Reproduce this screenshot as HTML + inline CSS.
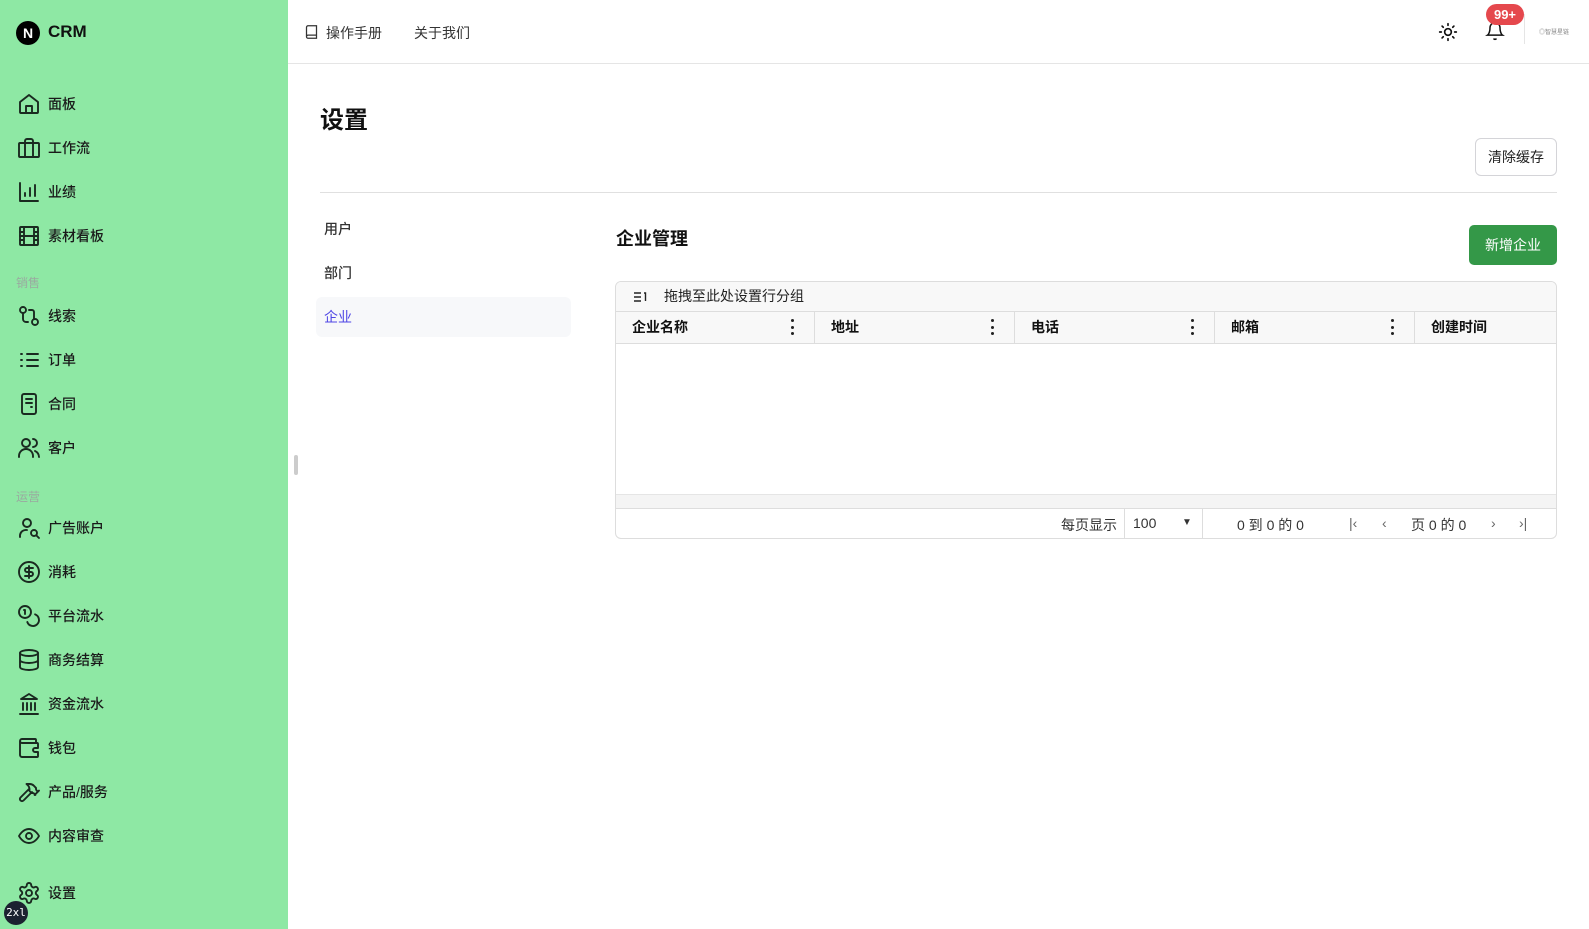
<!DOCTYPE html>
<html><head><meta charset="utf-8"><style>
*{box-sizing:border-box;margin:0;padding:0}
body{width:1589px;height:929px;overflow:hidden;font-family:"Liberation Sans","Noto Sans CJK SC",sans-serif;color:#111;background:#fff;position:relative}
.sb{position:absolute;left:0;top:0;width:288px;height:929px;background:#8ee8a4}
.abs{position:absolute}
.it{position:absolute;left:17px;display:flex;align-items:center;font-size:14px;color:#1a1a1a;font-weight:500;height:24px}
.it svg{width:24px;height:24px;margin-right:7px;fill:none;stroke:#1a2a20;stroke-width:1.9;stroke-linecap:round;stroke-linejoin:round}
.sec{position:absolute;left:16px;font-size:12px;color:#9aaaa0}
.th{position:absolute;top:311px;height:32px;border-right:1px solid #ddd;font-size:14px;font-weight:600;display:flex;align-items:center;padding-left:16px}
.dots{position:absolute;right:20px;top:8px;width:3px;height:16px;display:flex;flex-direction:column;justify-content:space-between}
.dots i{display:block;width:3px;height:3px;border-radius:50%;background:#222}
</style></head><body>
<div class="sb">
 <div class="abs" style="left:16px;top:21px;width:24px;height:24px;border-radius:50%;background:#000;color:#fff;font-size:14px;text-align:center;line-height:24px;font-weight:600">N</div>
 <div class="abs" style="left:48px;top:22px;font-size:17px;font-weight:700">CRM</div>
 <div class="it" style="top:92px"><svg viewBox="0 0 24 24"><path d="M3 10l9-7 9 7v10a1 1 0 0 1-1 1H4a1 1 0 0 1-1-1z"/><path d="M9 21v-7h6v7"/></svg>面板</div>
 <div class="it" style="top:136px"><svg viewBox="0 0 24 24"><rect x="2" y="7" width="20" height="14" rx="1"/><path d="M16 21V5a2 2 0 0 0-2-2h-4a2 2 0 0 0-2 2v16"/></svg>工作流</div>
 <div class="it" style="top:180px"><svg viewBox="0 0 24 24"><path d="M3 3v18h18M8 16v-3M13 16V8M18 16V5"/></svg>业绩</div>
 <div class="it" style="top:224px"><svg viewBox="0 0 24 24"><rect x="3" y="3" width="18" height="18" rx="1"/><path d="M7 3v18M17 3v18M3 8h4M3 12h18M3 16h4M17 8h4M17 16h4"/></svg>素材看板</div>
 <div class="sec" style="top:274px">销售</div>
 <div class="it" style="top:304px"><svg viewBox="0 0 24 24"><circle cx="6" cy="6" r="3"/><circle cx="18" cy="18" r="3"/><path d="M6 9v6a3 3 0 0 0 3 3h2M12 6h3a2 2 0 0 1 2 2v7"/></svg>线索</div>
 <div class="it" style="top:348px"><svg viewBox="0 0 24 24"><path d="M10 6h11M10 12h11M10 18h11M4 6h1M4 12h1M4 18h1"/></svg>订单</div>
 <div class="it" style="top:392px"><svg viewBox="0 0 24 24"><rect x="5" y="2" width="14" height="20" rx="2"/><path d="M9 7h6M9 11h6M14 15h1"/></svg>合同</div>
 <div class="it" style="top:436px"><svg viewBox="0 0 24 24"><circle cx="9" cy="7" r="4"/><path d="M2 21v-1a7 7 0 0 1 14 0v1M16 3a4 4 0 0 1 0 8M22 21a7 7 0 0 0-4-6"/></svg>客户</div>
 <div class="sec" style="top:488px">运营</div>
 <div class="it" style="top:516px"><svg viewBox="0 0 24 24"><circle cx="10" cy="7" r="4"/><path d="M3 21v-2a6 6 0 0 1 7-5"/><circle cx="17" cy="17" r="3"/><path d="M19.5 19.5L22 22"/></svg>广告账户</div>
 <div class="it" style="top:560px"><svg viewBox="0 0 24 24"><circle cx="12" cy="12" r="10"/><path d="M16 8h-6a2 2 0 1 0 0 4h4a2 2 0 1 1 0 4H8M12 18V6"/></svg>消耗</div>
 <div class="it" style="top:604px"><svg viewBox="0 0 24 24"><circle cx="8" cy="8" r="6"/><path d="M18.1 10.4A6 6 0 1 1 10.3 18M7 6h1v4"/></svg>平台流水</div>
 <div class="it" style="top:648px"><svg viewBox="0 0 24 24"><ellipse cx="12" cy="5" rx="9" ry="3"/><path d="M3 5v14c0 1.7 4 3 9 3s9-1.3 9-3V5M3 12c0 1.7 4 3 9 3s9-1.3 9-3"/></svg>商务结算</div>
 <div class="it" style="top:692px"><svg viewBox="0 0 24 24"><path d="M3 22h18M6 18v-7M10 18v-7M14 18v-7M18 18v-7M12 2l8 5H4z"/></svg>资金流水</div>
 <div class="it" style="top:736px"><svg viewBox="0 0 24 24"><path d="M19 7V4a1 1 0 0 0-1-1H5a2 2 0 0 0 0 4h15a1 1 0 0 1 1 1v4h-3a2 2 0 0 0 0 4h3v4a1 1 0 0 1-1 1H5a2 2 0 0 1-2-2V5"/></svg>钱包</div>
 <div class="it" style="top:780px"><svg viewBox="0 0 24 24"><path d="M15 12l-8.5 8.5a2.1 2.1 0 0 1-3-3L12 9M17.6 15L22 10.6M20.9 11.7l-1.3-1.3a2 2 0 0 1-.6-1.4V7.9L16.7 5.6A5.6 5.6 0 0 0 12.8 4H9.5l1 .9a6 6 0 0 1 2 4.5V11l2 2h1.2a2 2 0 0 1 1.4.6l1.3 1.3"/></svg>产品/服务</div>
 <div class="it" style="top:824px"><svg viewBox="0 0 24 24"><path d="M2 12s3.5-7 10-7 10 7 10 7-3.5 7-10 7S2 12 2 12z"/><circle cx="12" cy="12" r="3"/></svg>内容审查</div>
 <div class="it" style="top:881px"><svg viewBox="0 0 24 24"><circle cx="12" cy="12" r="3"/><path d="M12.2 2h-.4a2 2 0 0 0-2 2v.2a2 2 0 0 1-1 1.7l-.4.3a2 2 0 0 1-2 0l-.2-.1a2 2 0 0 0-2.7.7l-.2.4a2 2 0 0 0 .7 2.7l.2.1a2 2 0 0 1 1 1.7v.5a2 2 0 0 1-1 1.7l-.2.1a2 2 0 0 0-.7 2.7l.2.4a2 2 0 0 0 2.7.7l.2-.1a2 2 0 0 1 2 0l.4.3a2 2 0 0 1 1 1.7v.2a2 2 0 0 0 2 2h.4a2 2 0 0 0 2-2v-.2a2 2 0 0 1 1-1.7l.4-.3a2 2 0 0 1 2 0l.2.1a2 2 0 0 0 2.7-.7l.2-.4a2 2 0 0 0-.7-2.7l-.2-.1a2 2 0 0 1-1-1.7v-.5a2 2 0 0 1 1-1.7l.2-.1a2 2 0 0 0 .7-2.7l-.2-.4a2 2 0 0 0-2.7-.7l-.2.1a2 2 0 0 1-2 0l-.4-.3a2 2 0 0 1-1-1.7V4a2 2 0 0 0-2-2z"/></svg>设置</div>
 <div class="abs" style="left:4px;top:901px;width:24px;height:24px;border-radius:50%;background:#1c2230;color:#fff;font-size:11px;line-height:24px;text-align:center;font-family:'DejaVu Sans Mono',monospace">2xl</div>
</div>
<div class="abs" style="left:294px;top:455px;width:4px;height:20px;background:#ccc;border-radius:2px"></div>
<div class="abs" style="left:288px;top:63px;width:1301px;height:1px;background:#e5e5e5"></div>
<svg class="abs" style="left:304px;top:24px" width="15" height="16" viewBox="0 0 24 24" fill="none" stroke="#333" stroke-width="2"><path d="M4 19.5V4.5A2.5 2.5 0 0 1 6.5 2H20v20H6.5a2.5 2.5 0 0 1 0-5H20"/></svg>
<div class="abs" style="left:326px;top:23px;font-size:14px;color:#333">操作手册</div>
<div class="abs" style="left:414px;top:23px;font-size:14px;color:#333">关于我们</div>
<svg class="abs" style="left:1438px;top:22px" width="20" height="20" viewBox="0 0 24 24" fill="none" stroke="#111" stroke-width="2" stroke-linecap="round"><circle cx="12" cy="12" r="4"/><path d="M12 2v2M12 20v2M4.9 4.9l1.4 1.4M17.7 17.7l1.4 1.4M2 12h2M20 12h2M4.9 19.1l1.4-1.4M17.7 6.3l1.4-1.4"/></svg>
<svg class="abs" style="left:1485px;top:20px" width="20" height="22" viewBox="0 0 24 24" fill="none" stroke="#111" stroke-width="1.8"><path d="M6 8a6 6 0 0 1 12 0c0 7 3 9 3 9H3s3-2 3-9M10.3 21a1.9 1.9 0 0 0 3.4 0"/></svg>
<div class="abs" style="left:1486px;top:4px;width:38px;height:21px;border-radius:11px;background:#e5484d;color:#fff;font-size:13px;text-align:center;line-height:21px;font-weight:600">99+</div>
<div class="abs" style="left:1524px;top:14px;width:1px;height:30px;background:#e5e5e5"></div>
<div class="abs" style="left:1539px;top:27px;font-size:6px;color:#888">◎智慧星链</div>
<div class="abs" style="left:320px;top:100px;font-size:24px;font-weight:700">设置</div>
<div class="abs" style="left:1475px;top:138px;width:82px;height:38px;border:1px solid #d4d4d8;border-radius:6px;font-size:14px;text-align:center;line-height:36px;color:#222">清除缓存</div>
<div class="abs" style="left:320px;top:192px;width:1237px;height:1px;background:#e0e0e0"></div>
<div class="abs" style="left:324px;top:219px;font-size:14px;color:#333;font-weight:500">用户</div>
<div class="abs" style="left:324px;top:263px;font-size:14px;color:#333;font-weight:500">部门</div>
<div class="abs" style="left:316px;top:297px;width:255px;height:40px;background:#f7f8fa;border-radius:6px"></div>
<div class="abs" style="left:324px;top:307px;font-size:14px;color:#4f46e5">企业</div>
<div class="abs" style="left:616px;top:225px;font-size:18px;font-weight:600">企业管理</div>
<div class="abs" style="left:1469px;top:225px;width:88px;height:40px;background:#349848;border-radius:5px;color:#fff;font-size:14px;text-align:center;line-height:40px">新增企业</div>
<div class="abs" style="left:615px;top:281px;width:942px;height:258px;border:1px solid #ddd;border-radius:6px;overflow:hidden">
 <div style="height:30px;background:#f8f8f8;border-bottom:1px solid #ddd;font-size:14px;color:#222;line-height:29px;padding-left:48px;position:relative">
  <svg style="position:absolute;left:17px;top:9px" width="14" height="12" viewBox="0 0 14 12" fill="none" stroke="#222" stroke-width="1.4"><path d="M1 2h7M1 6h7M1 10h7M11 2h1.5v8"/></svg>拖拽至此处设置行分组</div>
 <div style="height:32px;background:#f8f8f8;border-bottom:1px solid #ddd"></div>
 <div style="position:absolute;left:0;top:212px;width:100%;height:15px;background:#f4f4f4;border-top:1px solid #e5e5e5;border-bottom:1px solid #ddd"></div>
 <div style="position:absolute;left:0;top:227px;width:100%;height:31px;font-size:14px;color:#333">
  <span style="position:absolute;left:445px;top:6px">每页显示</span>
  <div style="position:absolute;left:508px;top:0;width:79px;height:31px;border-left:1px solid #ddd;border-right:1px solid #ddd"><span style="position:absolute;left:8px;top:6px">100</span><span style="position:absolute;left:57px;top:8px;font-size:10px">▼</span></div>
  <span style="position:absolute;left:621px;top:6px">0 到 0 的 0</span>
  <span style="position:absolute;left:733px;top:6px;color:#666">|‹</span>
  <span style="position:absolute;left:766px;top:6px;color:#666">‹</span>
  <span style="position:absolute;left:795px;top:6px">页 0 的 0</span>
  <span style="position:absolute;left:875px;top:6px;color:#666">›</span>
  <span style="position:absolute;left:903px;top:6px;color:#666">›|</span>
 </div>
</div>
<div class="th" style="left:616px;width:199px">企业名称<div class="dots"><i></i><i></i><i></i></div></div>
<div class="th" style="left:815px;width:200px">地址<div class="dots"><i></i><i></i><i></i></div></div>
<div class="th" style="left:1015px;width:200px">电话<div class="dots"><i></i><i></i><i></i></div></div>
<div class="th" style="left:1215px;width:200px">邮箱<div class="dots"><i></i><i></i><i></i></div></div>
<div class="th" style="left:1415px;width:140px;border-right:none">创建时间</div>
</body></html>
